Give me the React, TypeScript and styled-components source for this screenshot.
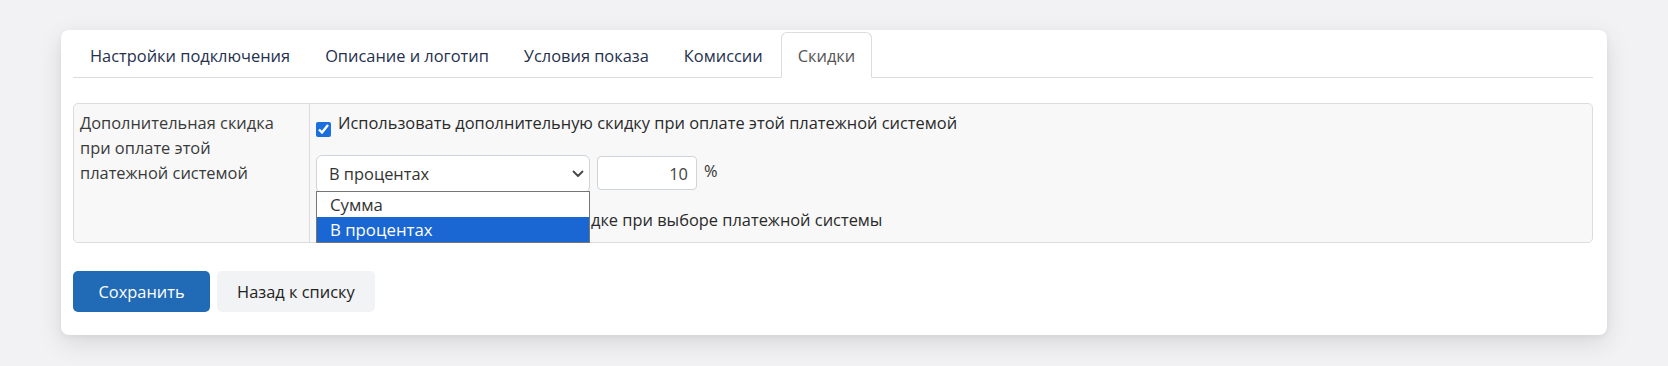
import React from "react";
import styled, { createGlobalStyle } from "styled-components";

const GlobalStyle = createGlobalStyle`
  * { box-sizing: border-box; }
  html, body {
    margin: 0;
    padding: 0;
    background: #f2f2f4;
  }
  body {
    font-family: "Open Sans", "Noto Sans", sans-serif;
    font-size: 16.4px;
    line-height: 24px;
    color: #212529;
  }
`;

const Page = styled.div`
  padding: 30px 61px 31px;
`;

const Card = styled.div`
  background: #ffffff;
  border-radius: 8px;
  box-shadow: 0 8px 26px rgba(0, 0, 0, 0.11), 0 2px 6px rgba(0, 0, 0, 0.05);
  padding: 2px 14px 23px 12px;
`;

const Tabs = styled.nav`
  display: flex;
  border-bottom: 1px solid #dcdcdc;
`;

const Tab = styled.div<{ $active?: boolean }>`
  padding: 11px 16px 9px;
  margin-right: 1px;
  margin-bottom: -1px;
  border: 1px solid ${(p) => (p.$active ? "#dcdcdc" : "transparent")};
  border-bottom-color: ${(p) => (p.$active ? "#ffffff" : "transparent")};
  border-radius: 6px 6px 0 0;
  background: ${(p) => (p.$active ? "#ffffff" : "transparent")};
  color: ${(p) => (p.$active ? "#555555" : "#25304d")};
  white-space: nowrap;
  cursor: pointer;
`;

const SettingsTable = styled.div`
  display: grid;
  grid-template-columns: 236px 1fr;
  margin-top: 25px;
  margin-bottom: 28px;
  border: 1px solid #dcdcdc;
  border-radius: 5px;
  background: #f8f8f8;
`;

const LabelCell = styled.div`
  padding: 6px 10px 6px 6px;
  border-right: 1px solid #dcdcdc;
  color: #3a3a3a;
  line-height: 25px;
`;

const ValueCell = styled.div`
  padding: 7px 6px 10px;
`;

const CheckLine = styled.label`
  display: flex;
  align-items: flex-start;
  gap: 7px;
  height: 24px;
  color: #2a2a2a;
  white-space: nowrap;
`;

const Checkbox = styled.input`
  width: 15px;
  height: 15px;
  margin: 11px 0 0;
  flex: none;
  accent-color: #1a6fdc;
`;

const SelectRow = styled.div`
  display: flex;
  align-items: flex-start;
  gap: 7px;
  height: 38px;
  margin: 20px 0 15px;
`;

const SelectBox = styled.div`
  position: relative;
  width: 274px;
  height: 38px;
  padding: 0 5px 0 12px;
  display: flex;
  align-items: center;
  justify-content: space-between;
  background: #ffffff;
  border: 1px solid #ced4da;
  border-radius: 6px;
  color: #333333;
`;

const Dropdown = styled.ul`
  position: absolute;
  top: calc(100% - 1px);
  left: -1px;
  width: 274px;
  margin: 0;
  padding: 0;
  list-style: none;
  background: #ffffff;
  border: 1px solid #767676;
  font-size: 16.8px;
  z-index: 5;
`;

const Option = styled.li<{ $selected?: boolean }>`
  height: 25px;
  line-height: 25px;
  padding-left: 13px;
  background: ${(p) => (p.$selected ? "#1a66d3" : "#ffffff")};
  color: ${(p) => (p.$selected ? "#ffffff" : "#333333")};
`;

const AmountInput = styled.input`
  width: 100px;
  height: 34px;
  margin-top: 1px;
  padding: 0 8px;
  border: 1px solid #ced4da;
  border-radius: 4px;
  background: #ffffff;
  font: inherit;
  color: #444444;
  text-align: right;
  outline: none;
`;

const Unit = styled.span`
  margin-top: 4px;
  color: #333333;
`;

const Actions = styled.div`
  display: flex;
  gap: 7px;
`;

const Button = styled.button<{ $primary?: boolean }>`
  height: 41px;
  padding: 0 ${(p) => (p.$primary ? "25.5px" : "20px")};
  border: none;
  border-radius: 5px;
  font: inherit;
  background: ${(p) => (p.$primary ? "#216ab5" : "#f2f3f5")};
  color: ${(p) => (p.$primary ? "#ffffff" : "#222222")};
  cursor: pointer;
`;

const Chevron = () => (
  <svg width="12" height="8" viewBox="0 0 12 8" fill="none">
    <path d="M1.5 1.5 L6 6 L10.5 1.5" stroke="#444" strokeWidth="1.8" strokeLinecap="round" strokeLinejoin="round" />
  </svg>
);

const tabs = ["Настройки подключения", "Описание и логотип", "Условия показа", "Комиссии", "Скидки"];

export default function App() {
  return (
    <>
      <GlobalStyle />
      <Page>
        <Card>
          <Tabs>
            {tabs.map((t, i) => (
              <Tab key={t} $active={i === tabs.length - 1}>
                {t}
              </Tab>
            ))}
          </Tabs>
          <SettingsTable>
            <LabelCell>Дополнительная скидка при оплате этой платежной системой</LabelCell>
            <ValueCell>
              <CheckLine>
                <Checkbox type="checkbox" defaultChecked />
                Использовать дополнительную скидку при оплате этой платежной системой
              </CheckLine>
              <SelectRow>
                <SelectBox>
                  <span>В процентах</span>
                  <Chevron />
                  <Dropdown>
                    <Option>Сумма</Option>
                    <Option $selected>В процентах</Option>
                  </Dropdown>
                </SelectBox>
                <AmountInput defaultValue="10" />
                <Unit>%</Unit>
              </SelectRow>
              <CheckLine>
                <Checkbox type="checkbox" />
                Показывать информацию о скидке при выборе платежной системы
              </CheckLine>
            </ValueCell>
          </SettingsTable>
          <Actions>
            <Button $primary>Сохранить</Button>
            <Button>Назад к списку</Button>
          </Actions>
        </Card>
      </Page>
    </>
  );
}
